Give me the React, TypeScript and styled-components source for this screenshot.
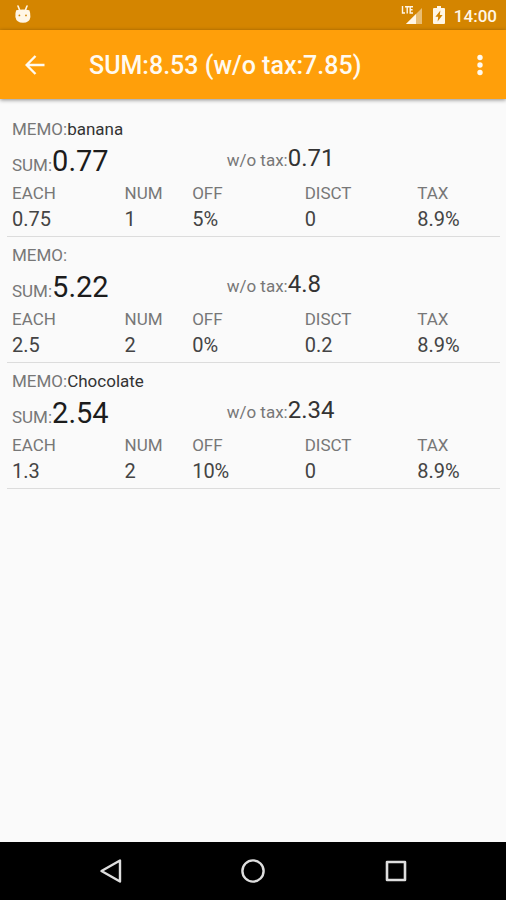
import React from "react";
import styled, { createGlobalStyle } from "styled-components";

const GlobalStyle = createGlobalStyle`
  * { box-sizing: border-box; }
  body {
    margin: 0;
    background: #fafafa;
    font-family: Roboto, "Liberation Sans", sans-serif;
  }
`;

const Screen = styled.div`
  display: flex;
  flex-direction: column;
  min-height: 100vh;
`;

const StatusBar = styled.div`
  display: flex;
  align-items: center;
  justify-content: space-between;
  height: 30px;
  padding: 0 9px 0 13px;
  background: #d48500;
  color: #fff6e6;
`;

const StatusGroup = styled.div`
  display: flex;
  align-items: center;
`;

const SignalIcon = styled.svg`
  margin-right: 10px;
`;

const BatteryIcon = styled.svg`
  margin-right: 9px;
`;

const Clock = styled.time`
  font-size: 17px;
  line-height: 30px;
  font-weight: 500;
  padding-top: 2px;
`;

const AppBar = styled.header`
  display: flex;
  align-items: center;
  height: 69px;
  padding: 0 8px 0 17px;
  background: #ff9f0a;
  color: #fffaf0;
  box-shadow: 0 1px 4px rgba(0, 0, 0, 0.45);
`;

const Title = styled.h1`
  flex: 1;
  margin: 0 0 0 36px;
  padding-top: 2px;
  font-size: 25px;
  line-height: 32px;
  font-weight: 500;
`;

const IconButton = styled.button`
  display: flex;
  align-items: center;
  justify-content: center;
  width: 36px;
  height: 48px;
  padding: 0;
  border: 0;
  background: none;
  color: inherit;
`;

const List = styled.ul`
  flex: 1;
  list-style: none;
  margin: 0;
  padding: 12px 6px 12px 7px;
`;

const Item = styled.li`
  padding: 5px;
  padding-bottom: 4px;
  border-bottom: 1px solid #dcdcdc;
`;

const Memo = styled.div`
  font-size: 17px;
  line-height: 26px;
  color: #333;
`;

const Totals = styled.div`
  display: grid;
  grid-template-columns: 4fr 5fr;
  height: 38px;
`;

const Label = styled.span`
  font-size: 17px;
  color: #777;
`;

const Amount = styled.div<{ $size: number; $line: number }>`
  font-size: ${(p) => p.$size}px;
  line-height: ${(p) => p.$line}px;
  color: ${(p) => (p.$size > 28 ? "#1c1c1c" : "#333")};
`;

const Details = styled.table`
  width: 100%;
  table-layout: fixed;
  border-collapse: collapse;
`;

const Column = styled.col<{ $share: number }>`
  width: ${(p) => p.$share}%;
`;

const Head = styled.th`
  padding: 0;
  text-align: left;
  font-size: 17px;
  line-height: 26px;
  font-weight: 400;
  color: #777;
`;

const Cell = styled.td`
  padding: 0;
  font-size: 20px;
  line-height: 26px;
  color: #444;
`;

const NavBar = styled.nav`
  display: grid;
  grid-template-columns: repeat(3, 143px);
  justify-content: center;
  align-items: center;
  height: 58px;
  background: #000;
  color: #dedede;
`;

const NavButton = styled(IconButton)`
  width: 48px;
  justify-self: center;
`;

const columns = [
  { name: "EACH", share: 23.3 },
  { name: "NUM", share: 14 },
  { name: "OFF", share: 23.3 },
  { name: "DISCT", share: 23.3 },
  { name: "TAX", share: 16.1 },
];

const items = [
  { memo: "banana", sum: "0.77", net: "0.71", values: ["0.75", "1", "5%", "0", "8.9%"] },
  { memo: "", sum: "5.22", net: "4.8", values: ["2.5", "2", "0%", "0.2", "8.9%"] },
  { memo: "Chocolate", sum: "2.54", net: "2.34", values: ["1.3", "2", "10%", "0", "8.9%"] },
];

export default function App() {
  return (
    <Screen>
      <GlobalStyle />
      <StatusBar>
        <svg width="20" height="20" viewBox="0 0 20 20" aria-hidden="true">
          <path d="M5 1 7 6M14 1 12 6" stroke="#fff6e6" strokeWidth="1.6" strokeLinecap="round" />
          <path d="M3.2 5.2Q10 3.6 16.4 5.2Q17.6 8 17.4 12Q16.6 17.8 10 17.8Q3.4 17.8 2.4 12Q2 8 3.2 5.2Z" fill="#fff6e6" />
          <circle cx="6.4" cy="10.4" r="0.9" fill="#d48500" />
          <circle cx="13" cy="10.4" r="0.9" fill="#d48500" />
        </svg>
        <StatusGroup>
          <SignalIcon width="22" height="20" viewBox="0 0 22 20" aria-label="LTE signal" role="img">
            <path d="M21 3V19H5Z" fill="#e9bd72" />
            <path d="M15 9V19H5Z" fill="#fff6e6" />
            <path d="M1.5 1V8H4M4 1.7H8.4M6.2 1.7V8.5M12 1.7H9.2V8H12M9.2 4.8H11.6" fill="none" stroke="#fff6e6" strokeWidth="1.4" />
          </SignalIcon>
          <BatteryIcon width="12" height="20" viewBox="0 0 12 20" aria-label="Battery charging" role="img">
            <path d="M4 1H8V3H11Q12 3 12 4V18Q12 19 11 19H1Q0 19 0 18V4Q0 3 1 3H4Z" fill="#fff6e6" />
            <path d="M7.4 5.5 2.4 11.8H5.2L4.6 16.5 9.6 10H6.8Z" fill="#d48500" />
          </BatteryIcon>
          <Clock>14:00</Clock>
        </StatusGroup>
      </StatusBar>
      <AppBar>
        <IconButton type="button" aria-label="Back">
          <svg width="20" height="20" viewBox="0 0 20 20" fill="none" stroke="currentColor" strokeWidth="2.4">
            <path d="M19.5 10H2M10.5 1 1.6 10 10.5 19" />
          </svg>
        </IconButton>
        <Title>SUM:8.53 (w/o tax:7.85)</Title>
        <IconButton type="button" aria-label="More options">
          <svg width="6" height="22" viewBox="0 0 6 22" fill="currentColor">
            <circle cx="3" cy="3.5" r="2.7" />
            <circle cx="3" cy="11" r="2.7" />
            <circle cx="3" cy="18.5" r="2.7" />
          </svg>
        </IconButton>
      </AppBar>
      <List>
        {items.map((item) => (
          <Item key={item.sum}>
            <Memo>
              <Label>MEMO:</Label>
              {item.memo}
            </Memo>
            <Totals>
              <Amount $size={29} $line={38}>
                <Label>SUM:</Label>
                {item.sum}
              </Amount>
              <Amount $size={24} $line={32}>
                <Label>w/o tax:</Label>
                {item.net}
              </Amount>
            </Totals>
            <Details>
              <colgroup>
                {columns.map((c) => (
                  <Column key={c.name} $share={c.share} />
                ))}
              </colgroup>
              <thead>
                <tr>
                  {columns.map((c) => (
                    <Head key={c.name} scope="col">{c.name}</Head>
                  ))}
                </tr>
              </thead>
              <tbody>
                <tr>
                  {item.values.map((value, i) => (
                    <Cell key={columns[i].name}>{value}</Cell>
                  ))}
                </tr>
              </tbody>
            </Details>
          </Item>
        ))}
      </List>
      <NavBar aria-label="System">
        <NavButton type="button" aria-label="Back">
          <svg width="24" height="26" viewBox="0 0 24 26" fill="none" stroke="currentColor" strokeWidth="2.4" strokeLinejoin="round">
            <path d="M22 2.5V23.5L3.5 13Z" />
          </svg>
        </NavButton>
        <NavButton type="button" aria-label="Home">
          <svg width="26" height="26" viewBox="0 0 26 26" fill="none" stroke="currentColor" strokeWidth="2.4">
            <circle cx="13" cy="13" r="10.6" />
          </svg>
        </NavButton>
        <NavButton type="button" aria-label="Recent apps">
          <svg width="22" height="22" viewBox="0 0 22 22" fill="none" stroke="currentColor" strokeWidth="2.6" strokeLinejoin="round">
            <rect x="2" y="2" width="18" height="18" />
          </svg>
        </NavButton>
      </NavBar>
    </Screen>
  );
}
